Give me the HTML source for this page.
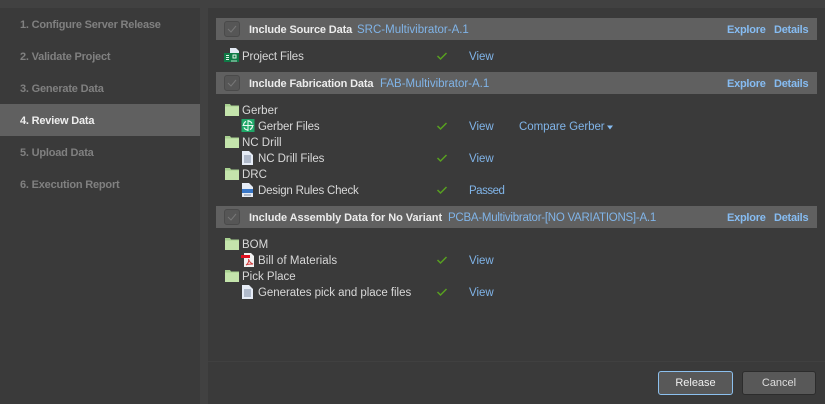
<!DOCTYPE html>
<html><head><meta charset="utf-8"><style>
html,body{margin:0;padding:0}
body{width:825px;height:404px;overflow:hidden;background:#414141;position:relative;font-family:"Liberation Sans",sans-serif;font-size:11.5px;color:#d8d8d8}
div{position:absolute}
.t{white-space:nowrap;line-height:16px;height:16px;letter-spacing:0;margin-top:1px}
.s{left:20px;color:#808080;font-weight:bold;font-size:11px;letter-spacing:-.2px}
.bar{left:216px;width:601px;height:22px;background:#606060}
.cb{left:224px;width:16px;height:16px;border:1px solid #4a4a4a;border-radius:3px;background:#565656;box-sizing:border-box}
.h{color:#ececec;font-weight:bold;font-size:11px;letter-spacing:-.14px}
.l{color:#80b4e8}
.lb{color:#86bcf2;font-weight:bold;font-size:11px;letter-spacing:-.25px}
.b{margin:0;top:371px;height:24px;box-sizing:border-box;border-radius:3px;background:#585858;text-align:center;line-height:23px;font-size:11px}
svg{position:absolute;overflow:visible}
</style></head><body>
<div style="left:0;top:8px;width:200px;height:396px;background:#3a3a3a"></div>
<div style="left:208px;top:8px;width:617px;height:396px;background:#3a3a3a"></div>
<div style="left:0;top:104px;width:200px;height:32px;background:#606060"></div>
<div class="t s" style="top:16px">1. Configure Server Release</div>
<div class="t s" style="top:48px">2. Validate Project</div>
<div class="t s" style="top:80px">3. Generate Data</div>
<div class="t s" style="top:112px;color:#eee">4. Review Data</div>
<div class="t s" style="top:144px">5. Upload Data</div>
<div class="t s" style="top:176px">6. Execution Report</div>

<div class="bar" style="top:18px"></div><div class="bar" style="top:72px"></div><div class="bar" style="top:206px"></div>
<div class="cb" style="top:21px"></div><div class="cb" style="top:75px"></div><div class="cb" style="top:209px"></div>
<svg width="825" height="404" style="left:0;top:0">
<g fill="none" stroke="#777" stroke-width="1"><path d="M228 29l3 3 5-6M228 83l3 3 5-6M228 217l3 3 5-6"/></g>
<g fill="none" stroke="#58a020" stroke-width="1.5"><path d="M437.500 56l3 3 6-6M437.500 126l3 3 6-6M437.500 158l3 3 6-6M437.500 190l3 3 6-6M437.500 260l3 3 6-6M437.500 292l3 3 6-6"/></g>
<defs>
<g id="f"><path d="M0 1h5l1 1.500h8v10.500H0z" fill="#a8d090"/><path d="M0 3.500h14v9.500H0z" fill="#c4e4ac"/></g>
<g id="d"><path d="M0 0h7l4 4v10H0z" fill="#e6ecf6"/><path d="M2 5h7M2 7h7M2 9h7M2 11h7" stroke="#7a88a0"/></g>
</defs>
<use href="#f" x="225" y="103"/><use href="#f" x="225" y="135"/><use href="#f" x="225" y="167"/><use href="#f" x="225" y="237"/><use href="#f" x="225" y="269"/>
<path d="M230 48h6l3 3v7h-9z" fill="#e4eaf4"/><rect x="224" y="53" width="15" height="9" fill="#0f7a46"/><path d="M226 55.500h3M226 57.500h3M226 59.500h3M233 55h3v3h-3z" stroke="#e0f4e8" fill="none"/><path d="M232 62v-2M234 62v-2M236 62v-2" stroke="#e0f4e8" stroke-width=".8"/>
<rect x="241.500" y="119" width="13" height="13" fill="#1ea868"/><circle cx="248" cy="125.500" r="4.500" fill="none" stroke="#e8f8f0" stroke-width="1.200" stroke-dasharray="5 2"/><path d="M248 120v11M242.500 125.500h11" stroke="#e8f8f0"/>
<use href="#d" x="242" y="151"/>
<path d="M242 183h7l4 4v10h-11z" fill="#e6ecf6"/><rect x="242" y="189" width="11" height="4" fill="#3a78c8"/><path d="M244 195h7" stroke="#7a88a0"/>
<path d="M244 253h7l3 3v11h-10z" fill="#f2f2f2"/><rect x="241" y="255" width="9" height="3" fill="#e01020"/><path d="M246 265c3-2 3-4 2.500-6 1 3 2 4 4.500 5-3 0-5 0-7 1z" fill="none" stroke="#d04040"/>
<use href="#d" x="242" y="285"/>
<path d="M607 125.500h6l-3 4z" fill="#86bcf2"/>
</svg>

<div class="t h" style="left:249px;top:21px">Include Source Data</div>
<div class="t l" style="left:357px;top:21px">SRC-Multivibrator-A.1</div>
<div class="t h" style="left:249px;top:75px">Include Fabrication Data</div>
<div class="t l" style="left:380px;top:75px">FAB-Multivibrator-A.1</div>
<div class="t h" style="left:249px;top:209px;letter-spacing:-.06px">Include Assembly Data for No Variant</div>
<div class="t l" style="left:448px;top:209px;letter-spacing:-.25px">PCBA-Multivibrator-[NO VARIATIONS]-A.1</div>

<div class="t lb" style="left:727px;top:21px">Explore</div><div class="t lb" style="left:774px;top:21px">Details</div>
<div class="t lb" style="left:727px;top:75px">Explore</div><div class="t lb" style="left:774px;top:75px">Details</div>
<div class="t lb" style="left:727px;top:209px">Explore</div><div class="t lb" style="left:774px;top:209px">Details</div>

<div class="t" style="left:242px;top:48px;letter-spacing:-.12px">Project Files</div>
<div class="t" style="left:242px;top:102px">Gerber</div>
<div class="t" style="left:258px;top:118px;letter-spacing:-.15px">Gerber Files</div>
<div class="t" style="left:242px;top:134px">NC Drill</div>
<div class="t" style="left:258px;top:150px;letter-spacing:-.05px">NC Drill Files</div>
<div class="t" style="left:242px;top:166px">DRC</div>
<div class="t" style="left:258px;top:182px;letter-spacing:-.2px">Design Rules Check</div>
<div class="t" style="left:242px;top:236px">BOM</div>
<div class="t" style="left:258px;top:252px;letter-spacing:.07px">Bill of Materials</div>
<div class="t" style="left:242px;top:268px">Pick Place</div>
<div class="t" style="left:258px;top:284px;letter-spacing:-.03px">Generates pick and place files</div>

<div class="t l" style="left:469px;top:48px">View</div>
<div class="t l" style="left:469px;top:118px">View</div>
<div class="t l" style="left:519px;top:118px;letter-spacing:-.05px">Compare Gerber</div>
<div class="t l" style="left:469px;top:150px">View</div>
<div class="t l" style="left:469px;top:182px;letter-spacing:-.5px">Passed</div>
<div class="t l" style="left:469px;top:252px">View</div>
<div class="t l" style="left:469px;top:284px">View</div>

<div style="left:208px;top:361px;width:617px;height:1px;background:#404040"></div>
<div class="t b" style="left:658px;width:75px;border:1px solid #8cc0ee;color:#f0f0f0">Release</div>
<div class="t b" style="left:742px;width:74px;border:1px solid #2c2c2c;color:#ddd">Cancel</div>
</body></html>
